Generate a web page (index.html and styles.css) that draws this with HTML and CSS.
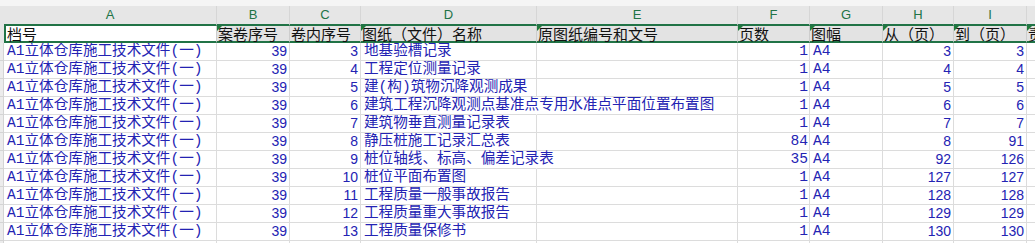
FILE: index.html
```html
<!DOCTYPE html>
<html lang="zh">
<head>
<meta charset="utf-8">
<link rel="stylesheet" href="styles.css">
</head>
<body>
<div class="sheet">
  <div class="topstrip"></div>
  <div class="row colhead">
    <div class="hc side"></div>
    <div class="hc">A</div><div class="hc">B</div><div class="hc">C</div><div class="hc">D</div><div class="hc">E</div><div class="hc">F</div><div class="hc">G</div><div class="hc">H</div><div class="hc">I</div><div class="hc">J</div>
  </div>
  <div class="row titles">
    <div class="tc side"></div>
    <div class="tc first">档号</div>
    <div class="tc tri">案卷序号</div>
    <div class="tc">卷内序号</div>
    <div class="tc tri">图纸（文件）名称</div>
    <div class="tc tri">原图纸编号和文号</div>
    <div class="tc tri">页数</div>
    <div class="tc tri">图幅</div>
    <div class="tc tri">从（页）</div>
    <div class="tc tri">到（页）</div>
    <div class="tc tri">责任者</div>
  </div>

  <div class="row"><div class="c side"></div><div class="c txt">A1立体仓库施工技术文件(一)</div><div class="c num">39</div><div class="c num">3</div><div class="c txt">地基验槽记录</div><div class="c"></div><div class="c mnum">1</div><div class="c txt">A4</div><div class="c num">3</div><div class="c num">3</div><div class="c"></div></div>
  <div class="row"><div class="c side"></div><div class="c txt">A1立体仓库施工技术文件(一)</div><div class="c num">39</div><div class="c num">4</div><div class="c txt">工程定位测量记录</div><div class="c"></div><div class="c mnum">1</div><div class="c txt">A4</div><div class="c num">4</div><div class="c num">4</div><div class="c"></div></div>
  <div class="row"><div class="c side"></div><div class="c txt">A1立体仓库施工技术文件(一)</div><div class="c num">39</div><div class="c num">5</div><div class="c txt">建(构)筑物沉降观测成果</div><div class="c"></div><div class="c mnum">1</div><div class="c txt">A4</div><div class="c num">5</div><div class="c num">5</div><div class="c"></div></div>
  <div class="row"><div class="c side"></div><div class="c txt">A1立体仓库施工技术文件(一)</div><div class="c num">39</div><div class="c num">6</div><div class="c txt ovf">建筑工程沉降观测点基准点专用水准点平面位置布置图</div><div class="c"></div><div class="c mnum">1</div><div class="c txt">A4</div><div class="c num">6</div><div class="c num">6</div><div class="c"></div></div>
  <div class="row"><div class="c side"></div><div class="c txt">A1立体仓库施工技术文件(一)</div><div class="c num">39</div><div class="c num">7</div><div class="c txt">建筑物垂直测量记录表</div><div class="c"></div><div class="c mnum">1</div><div class="c txt">A4</div><div class="c num">7</div><div class="c num">7</div><div class="c"></div></div>
  <div class="row"><div class="c side"></div><div class="c txt">A1立体仓库施工技术文件(一)</div><div class="c num">39</div><div class="c num">8</div><div class="c txt">静压桩施工记录汇总表</div><div class="c"></div><div class="c mnum">84</div><div class="c txt">A4</div><div class="c num">8</div><div class="c num">91</div><div class="c"></div></div>
  <div class="row"><div class="c side"></div><div class="c txt">A1立体仓库施工技术文件(一)</div><div class="c num">39</div><div class="c num">9</div><div class="c txt ovf">桩位轴线、标高、偏差记录表</div><div class="c"></div><div class="c mnum">35</div><div class="c txt">A4</div><div class="c num">92</div><div class="c num">126</div><div class="c"></div></div>
  <div class="row"><div class="c side"></div><div class="c txt">A1立体仓库施工技术文件(一)</div><div class="c num">39</div><div class="c num">10</div><div class="c txt">桩位平面布置图</div><div class="c"></div><div class="c mnum">1</div><div class="c txt">A4</div><div class="c num">127</div><div class="c num">127</div><div class="c"></div></div>
  <div class="row"><div class="c side"></div><div class="c txt">A1立体仓库施工技术文件(一)</div><div class="c num">39</div><div class="c num">11</div><div class="c txt">工程质量一般事故报告</div><div class="c"></div><div class="c mnum">1</div><div class="c txt">A4</div><div class="c num">128</div><div class="c num">128</div><div class="c"></div></div>
  <div class="row"><div class="c side"></div><div class="c txt">A1立体仓库施工技术文件(一)</div><div class="c num">39</div><div class="c num">12</div><div class="c txt">工程质量重大事故报告</div><div class="c"></div><div class="c mnum">1</div><div class="c txt">A4</div><div class="c num">129</div><div class="c num">129</div><div class="c"></div></div>
  <div class="row"><div class="c side"></div><div class="c txt">A1立体仓库施工技术文件(一)</div><div class="c num">39</div><div class="c num">13</div><div class="c txt">工程质量保修书</div><div class="c"></div><div class="c mnum">1</div><div class="c txt">A4</div><div class="c num">130</div><div class="c num">130</div><div class="c"></div></div>
  <div class="row"><div class="c side"></div><div class="c"></div><div class="c"></div><div class="c"></div><div class="c"></div><div class="c"></div><div class="c"></div><div class="c"></div><div class="c"></div><div class="c"></div><div class="c"></div></div>
</div>
</body>
</html>
```

FILE: styles.css
```css
html, body {
  margin: 0;
  padding: 0;
  background: #ffffff;
  overflow: hidden;
}

.sheet {
  width: 1120px;
}

.topstrip {
  height: 6px;
  background: #f5f5f5;
}

.row {
  display: grid;
  grid-template-columns: 4px 213px 73px 71px 176px 201px 72px 73px 71px 73px 93px;
}

/* column letters */
.hc {
  box-sizing: border-box;
  height: 20px;
  background: #e6e6e6;
  border-right: 1px solid #d6d6d6;
  border-bottom: 2px solid #217346;
  color: #217346;
  font-family: "Liberation Sans", "Noto Sans", sans-serif;
  font-size: 13px;
  line-height: 18px;
  text-align: center;
}

.hc.side {
  border-right: none;
  border-bottom-color: #e6e6e6;
}

/* selected title row */
.tc {
  position: relative;
  box-sizing: border-box;
  height: 17px;
  background: #e3e3e3;
  border-right: 1px solid #cdcdcd;
  border-bottom: 2px solid #217346;
  color: #111111;
  font-family: "Noto Sans CJK SC", sans-serif;
  font-size: 15px;
  line-height: 15px;
  padding-left: 1px;
  white-space: nowrap;
  overflow: visible;
}

.tc.side {
  background: #e6e6e6;
  border-right: none;
  border-bottom-color: #e6e6e6;
}

.tc.first {
  background: #ffffff;
  border-left: 2px solid #217346;
  padding-left: 1px;
}

.tc.tri::before {
  content: "";
  position: absolute;
  left: 0;
  top: 0;
  border-top: 5px solid #1f7a3c;
  border-right: 5px solid transparent;
}

/* data cells */
.c {
  box-sizing: border-box;
  height: 18px;
  border-right: 1px solid #dcdcdc;
  border-bottom: 1px solid #dcdcdc;
  color: #2323b3;
  white-space: nowrap;
  overflow: hidden;
  font-size: 14.6px;
  line-height: 17px;
}

.c.side {
  background: #ececec;
  border-right: 1px solid #d4d4d4;
  border-bottom-color: #d4d4d4;
}

.txt {
  font-family: "Liberation Mono", "Noto Sans CJK SC", monospace;
  padding-left: 3px;
}

.ovf {
  overflow: visible;
  border-right-color: transparent;
}

.num {
  font-family: "Liberation Sans", "Noto Sans", sans-serif;
  font-size: 14px;
  text-align: right;
  padding-right: 2px;
}

.mnum {
  font-family: "Liberation Mono", monospace;
  text-align: right;
  padding-right: 1px;
}
```
